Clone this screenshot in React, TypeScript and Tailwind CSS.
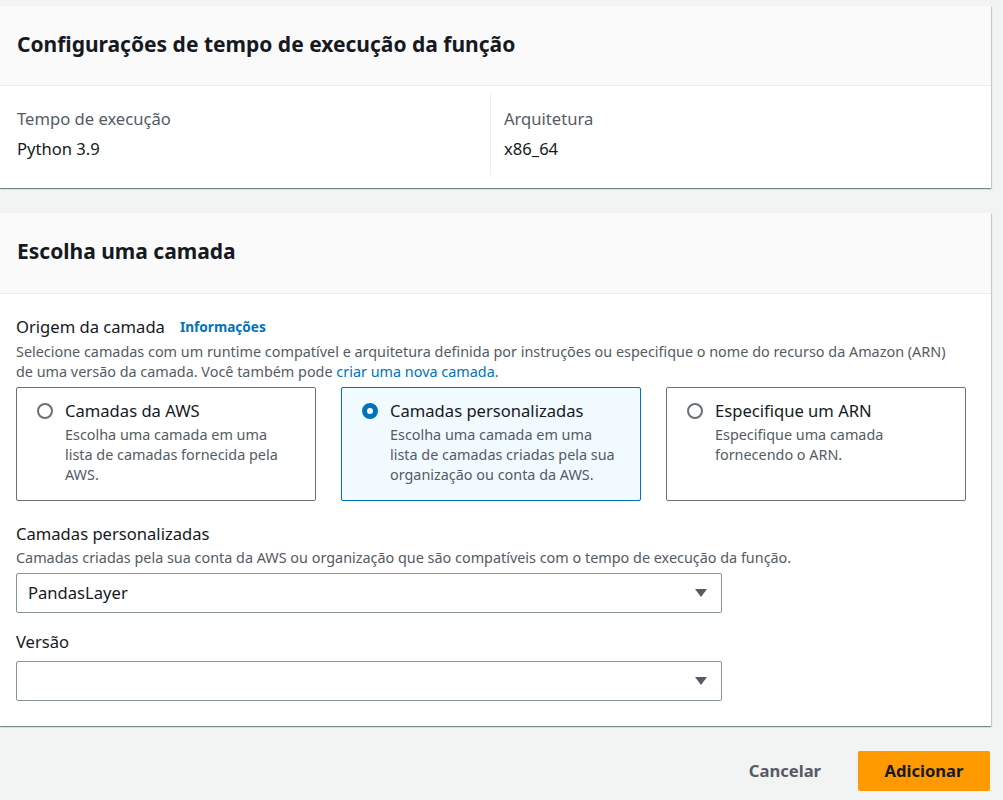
import React from "react";

const font = { fontFamily: '"Noto Sans", "Open Sans", Arial, sans-serif' };

function Radio({ checked }: { checked: boolean }) {
  return checked ? (
    <span className="mt-[3px] box-border block h-4 w-4 shrink-0 rounded-full border-[5px] border-[#0073bb] bg-white" />
  ) : (
    <span className="mt-[3px] box-border block h-4 w-4 shrink-0 rounded-full border-2 border-[#687078] bg-white" />
  );
}

function Tile({
  title,
  desc,
  checked,
}: {
  title: string;
  desc: string;
  checked: boolean;
}) {
  return (
    <div
      className={
        checked
          ? "flex h-[114px] gap-3 rounded-[2px] border border-[#0073bb] bg-[#f1faff] pl-[20px] pr-4 pt-[12px]"
          : "flex h-[114px] gap-3 rounded-[2px] border border-[#687078] bg-white pl-[20px] pr-4 pt-[12px]"
      }
    >
      <Radio checked={checked} />
      <div className="flex flex-col">
        <span className="text-[16.6px] leading-[22px] text-[#16191f]">{title}</span>
        <span className="mt-[3px] w-[228px] text-[14.4px] leading-[20px] text-[#545b64]">{desc}</span>
      </div>
    </div>
  );
}

function Caret() {
  return (
    <svg width="12" height="8" viewBox="0 0 12 8" className="shrink-0">
      <path d="M0 0 H12 L6 8 Z" fill="#545b64" />
    </svg>
  );
}

function Select({ value }: { value: string }) {
  return (
    <div className="flex h-[40px] w-[706px] items-center justify-between rounded-[2px] border border-[#879596] bg-white pl-[11px] pr-[14px]">
      <span className="text-[16.6px] text-[#16191f]">{value}</span>
      <Caret />
    </div>
  );
}

const cardShadow =
  "shadow-[0_1px_1px_0_rgba(0,28,36,0.3),1px_1px_1px_0_rgba(0,28,36,0.15),-1px_1px_1px_0_rgba(0,28,36,0.15)]";

export default function App() {
  return (
    <div className="min-h-[800px] w-[1003px] bg-[#f2f3f3] pr-[12px] pt-[6px]" style={font}>
      {/* Card 1 */}
      <div className={"bg-white " + cardShadow}>
        <div className="flex h-[80px] items-center border-b border-[#eaeded] bg-[#fafafa] px-[17px] pb-[4px]">
          <h2 className="text-[21px] font-bold leading-[28px] text-[#16191f]">
            Configurações de tempo de execução da função
          </h2>
        </div>
        <div className="flex h-[102px] pb-[13px] pt-[7px]">
          <div className="flex w-[490px] flex-col px-[17px] pt-[15px]">
            <span className="text-[16.6px] leading-[22px] text-[#545b64]">Tempo de execução</span>
            <span className="mt-[8px] text-[16.6px] leading-[22px] text-[#16191f]">Python 3.9</span>
          </div>
          <div className="flex flex-1 flex-col border-l border-[#eaeded] pl-[13px] pt-[15px]">
            <span className="text-[16.6px] leading-[22px] text-[#545b64]">Arquitetura</span>
            <span className="mt-[8px] text-[16.6px] leading-[22px] text-[#16191f]">x86_64</span>
          </div>
        </div>
      </div>

      {/* Card 2 */}
      <div className={"mt-[25px] bg-white " + cardShadow}>
        <div className="flex h-[81px] items-center border-b border-[#eaeded] bg-[#fafafa] px-[17px] pb-[4px]">
          <h2 className="text-[21px] font-bold leading-[28px] text-[#16191f]">Escolha uma camada</h2>
        </div>
        <div className="px-[16px] pb-[25px] pt-[22px]">
          <div className="flex items-center gap-[15px]">
            <span className="text-[16.6px] leading-[22px] text-[#16191f]">Origem da camada</span>
            <span className="text-[13.6px] font-bold leading-[22px] text-[#0073bb]">Informações</span>
          </div>
          <p className="mt-[4px] w-[950px] text-[14.4px] leading-[20px] text-[#545b64]">
            Selecione camadas com um runtime compatível e arquitetura definida por instruções ou especifique o nome
            do recurso da Amazon (ARN) de uma versão da camada. Você também pode{" "}
            <span className="text-[#0073bb]">criar uma nova camada</span>.
          </p>
          <div className="mt-[5px] grid w-[950px] grid-cols-3 gap-[25px]">
            <Tile
              checked={false}
              title="Camadas da AWS"
              desc="Escolha uma camada em uma lista de camadas fornecida pela AWS."
            />
            <Tile
              checked={true}
              title="Camadas personalizadas"
              desc="Escolha uma camada em uma lista de camadas criadas pela sua organização ou conta da AWS."
            />
            <Tile
              checked={false}
              title="Especifique um ARN"
              desc="Especifique uma camada fornecendo o ARN."
            />
          </div>

          <div className="mt-[22px] text-[16.6px] leading-[22px] text-[#16191f]">Camadas personalizadas</div>
          <div className="mt-[3px] text-[14.4px] leading-[20px] text-[#545b64]">
            Camadas criadas pela sua conta da AWS ou organização que são compatíveis com o tempo de execução da
            função.
          </div>
          <div className="mt-[5px]">
            <Select value="PandasLayer" />
          </div>

          <div className="mt-[18px] text-[16.6px] leading-[22px] text-[#16191f]">Versão</div>
          <div className="mt-[8px]">
            <Select value="" />
          </div>
        </div>
      </div>

      {/* Actions */}
      <div className="mt-[25px] flex items-center justify-end gap-[17px] pr-[1px]">
        <button className="h-[40px] px-[20px] text-[16.6px] font-bold text-[#545b64]">Cancelar</button>
        <button className="h-[40px] w-[132px] rounded-[2px] bg-[#ff9900] text-[16.6px] font-bold text-[#16191f]">
          Adicionar
        </button>
      </div>
    </div>
  );
}
